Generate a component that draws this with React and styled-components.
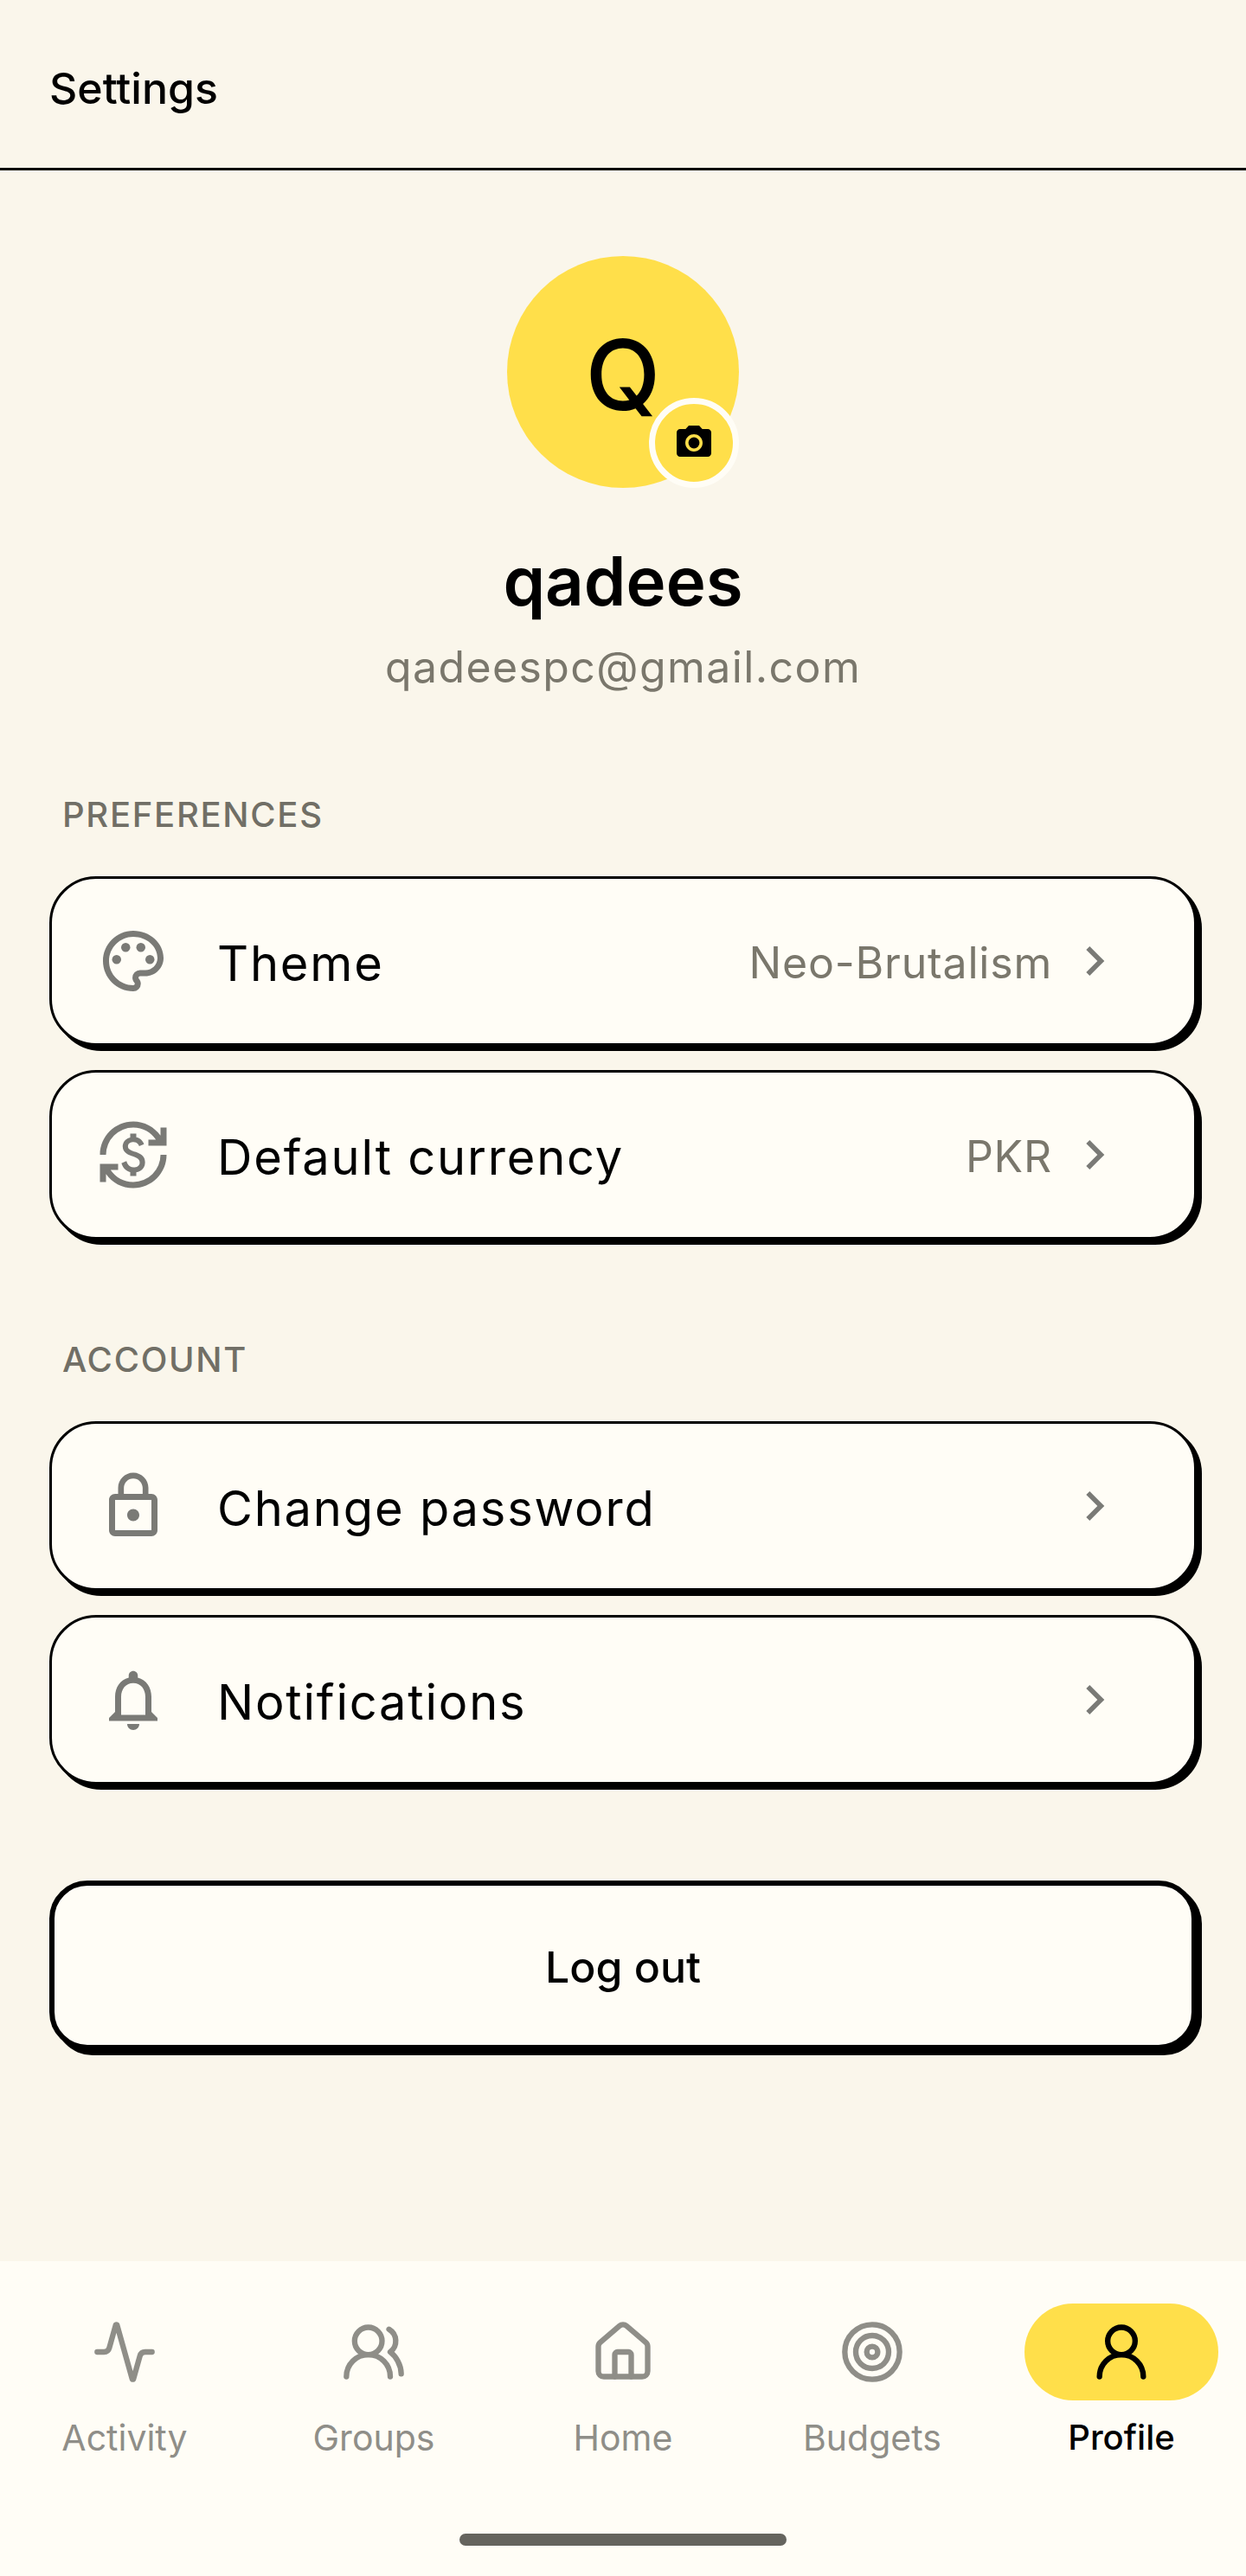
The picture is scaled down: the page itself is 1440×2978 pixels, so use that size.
import React from "react";
import styled, { createGlobalStyle } from "styled-components";
import {
  MdOutlinePalette,
  MdOutlineCurrencyExchange,
  MdLockOutline,
  MdOutlineNotifications,
  MdPhotoCamera,
  MdChevronRight,
} from "react-icons/md";
import { Activity, UsersRound, House, Target, UserRound } from "lucide-react";

const GlobalStyle = createGlobalStyle`
  html, body {
    margin: 0;
    padding: 0;
    background: #faf6eb;
    font-family: "Inter", "Liberation Sans", sans-serif;
  }
  * { box-sizing: border-box; }
`;

const Page = styled.div`
  width: 1440px;
  height: 2978px;
  display: flex;
  flex-direction: column;
  background: #faf6eb;
  color: #000;
`;
const Header = styled.header`
  height: 197px;
  padding: 10px 57px 0;
  display: flex;
  align-items: center;
  border-bottom: 3px solid #000;
  font-size: 50px;
  font-weight: 500;
`;
const Main = styled.main`
  flex: 1;
  padding: 99px 57px 0;
`;
const Profile = styled.section`
  display: flex;
  flex-direction: column;
  align-items: center;
`;
const Avatar = styled.div`
  width: 268px;
  height: 268px;
  padding-top: 6px;
  border-radius: 50%;
  background: #ffdf4a;
  position: relative;
  display: flex;
  align-items: center;
  justify-content: center;
  font-size: 113px;
  font-weight: 500;
`;
const CameraBadge = styled.div`
  position: absolute;
  right: 0;
  bottom: 0;
  width: 104px;
  height: 104px;
  border-radius: 50%;
  border: 7px solid #fffdf6;
  background: #ffdf4a;
  display: flex;
  align-items: center;
  justify-content: center;
  font-size: 48px;
`;
const Name = styled.h1`
  margin: 58px 0 0;
  font-size: 78px;
  line-height: 100px;
  font-weight: 600;
`;
const Email = styled.div`
  margin-top: 19px;
  font-size: 50px;
  line-height: 60px;
  letter-spacing: 1.4px;
  color: #7a776c;
`;
const SectionLabel = styled.h2`
  margin: ${(p) => p.$top}px 0 0 15px;
  font-size: 40px;
  line-height: 50px;
  font-weight: 500;
  letter-spacing: 1.7px;
  color: #716f66;
`;
const CardList = styled.div`
  margin-top: 46px;
  display: flex;
  flex-direction: column;
  gap: 28px;
`;
const Row = styled.div`
  width: 1326px;
  height: 196px;
  padding: 0 58px 0 52px;
  display: flex;
  align-items: center;
  background: #fffdf6;
  border: 3px solid #000;
  border-radius: 54px;
  box-shadow: 6px 6px 0 #000;
`;
const RowIcon = styled.div`
  width: 84px;
  height: 84px;
  margin-right: 55px;
  font-size: 84px;
  line-height: 0;
  color: #7a7a76;
`;
const RowLabel = styled.div`
  flex: 1;
  padding-top: 6px;
  font-size: 56px;
  letter-spacing: 1.8px;
`;
const RowValue = styled.div`
  padding-top: 4px;
  font-size: 50px;
  letter-spacing: 0.8px;
  color: #7a776c;
`;
const Chevron = styled.div`
  width: 68px;
  margin: 0 23px 0 15px;
  font-size: 68px;
  line-height: 0;
  color: #7a7a76;
`;
const LogoutButton = styled.button`
  display: block;
  width: 1326px;
  height: 196px;
  margin-top: 111px;
  padding-top: 4px;
  background: #fffdf6;
  border: 6px solid #000;
  border-radius: 44px;
  box-shadow: 6px 6px 0 #000;
  font-family: inherit;
  font-size: 50px;
  font-weight: 500;
  color: #000;
`;
const BottomNav = styled.nav`
  height: 364px;
  background: #fffdf6;
  display: flex;
  flex-direction: column;
  align-items: center;
`;
const NavItems = styled.div`
  width: 100%;
  padding-top: 49px;
  display: grid;
  grid-template-columns: repeat(5, 288px);
`;
const NavItem = styled.div`
  display: flex;
  flex-direction: column;
  align-items: center;
  color: ${(p) => (p.$active ? "#000" : "#8f8e88")};
`;
const NavIconWrap = styled.div`
  width: 224px;
  height: 112px;
  border-radius: 56px;
  background: ${(p) => (p.$active ? "#ffdf4a" : "transparent")};
  display: flex;
  align-items: center;
  justify-content: center;
`;
const NavLabel = styled.div`
  margin-top: 18px;
  font-size: ${(p) => (p.$active ? "40px" : "41px")};
  line-height: 50px;
  font-weight: ${(p) => (p.$active ? 500 : 400)};
`;
const HomeIndicator = styled.div`
  margin-top: 86px;
  width: 378px;
  height: 14px;
  border-radius: 7px;
  background: #65645e;
`;

const navItems = [
  { label: "Activity", Icon: Activity },
  { label: "Groups", Icon: UsersRound },
  { label: "Home", Icon: House },
  { label: "Budgets", Icon: Target },
  { label: "Profile", Icon: UserRound, active: true },
];

const SettingRow = ({ Icon, label, value }) => (
  <Row>
    <RowIcon>
      <Icon />
    </RowIcon>
    <RowLabel>{label}</RowLabel>
    {value && <RowValue>{value}</RowValue>}
    <Chevron>
      <MdChevronRight />
    </Chevron>
  </Row>
);

export default function App() {
  return (
    <Page>
      <GlobalStyle />
      <Header>Settings</Header>
      <Main>
        <Profile>
          <Avatar>
            Q
            <CameraBadge>
              <MdPhotoCamera />
            </CameraBadge>
          </Avatar>
          <Name>qadees</Name>
          <Email>qadeespc@gmail.com</Email>
        </Profile>
        <SectionLabel $top={116}>PREFERENCES</SectionLabel>
        <CardList>
          <SettingRow Icon={MdOutlinePalette} label="Theme" value="Neo-Brutalism" />
          <SettingRow Icon={MdOutlineCurrencyExchange} label="Default currency" value="PKR" />
        </CardList>
        <SectionLabel $top={114}>ACCOUNT</SectionLabel>
        <CardList>
          <SettingRow Icon={MdLockOutline} label="Change password" />
          <SettingRow Icon={MdOutlineNotifications} label="Notifications" />
        </CardList>
        <LogoutButton>Log out</LogoutButton>
      </Main>
      <BottomNav>
        <NavItems>
          {navItems.map(({ label, Icon, active }) => (
            <NavItem key={label} $active={active}>
              <NavIconWrap $active={active}>
                <Icon size={76} strokeWidth={2} />
              </NavIconWrap>
              <NavLabel $active={active}>{label}</NavLabel>
            </NavItem>
          ))}
        </NavItems>
        <HomeIndicator />
      </BottomNav>
    </Page>
  );
}
